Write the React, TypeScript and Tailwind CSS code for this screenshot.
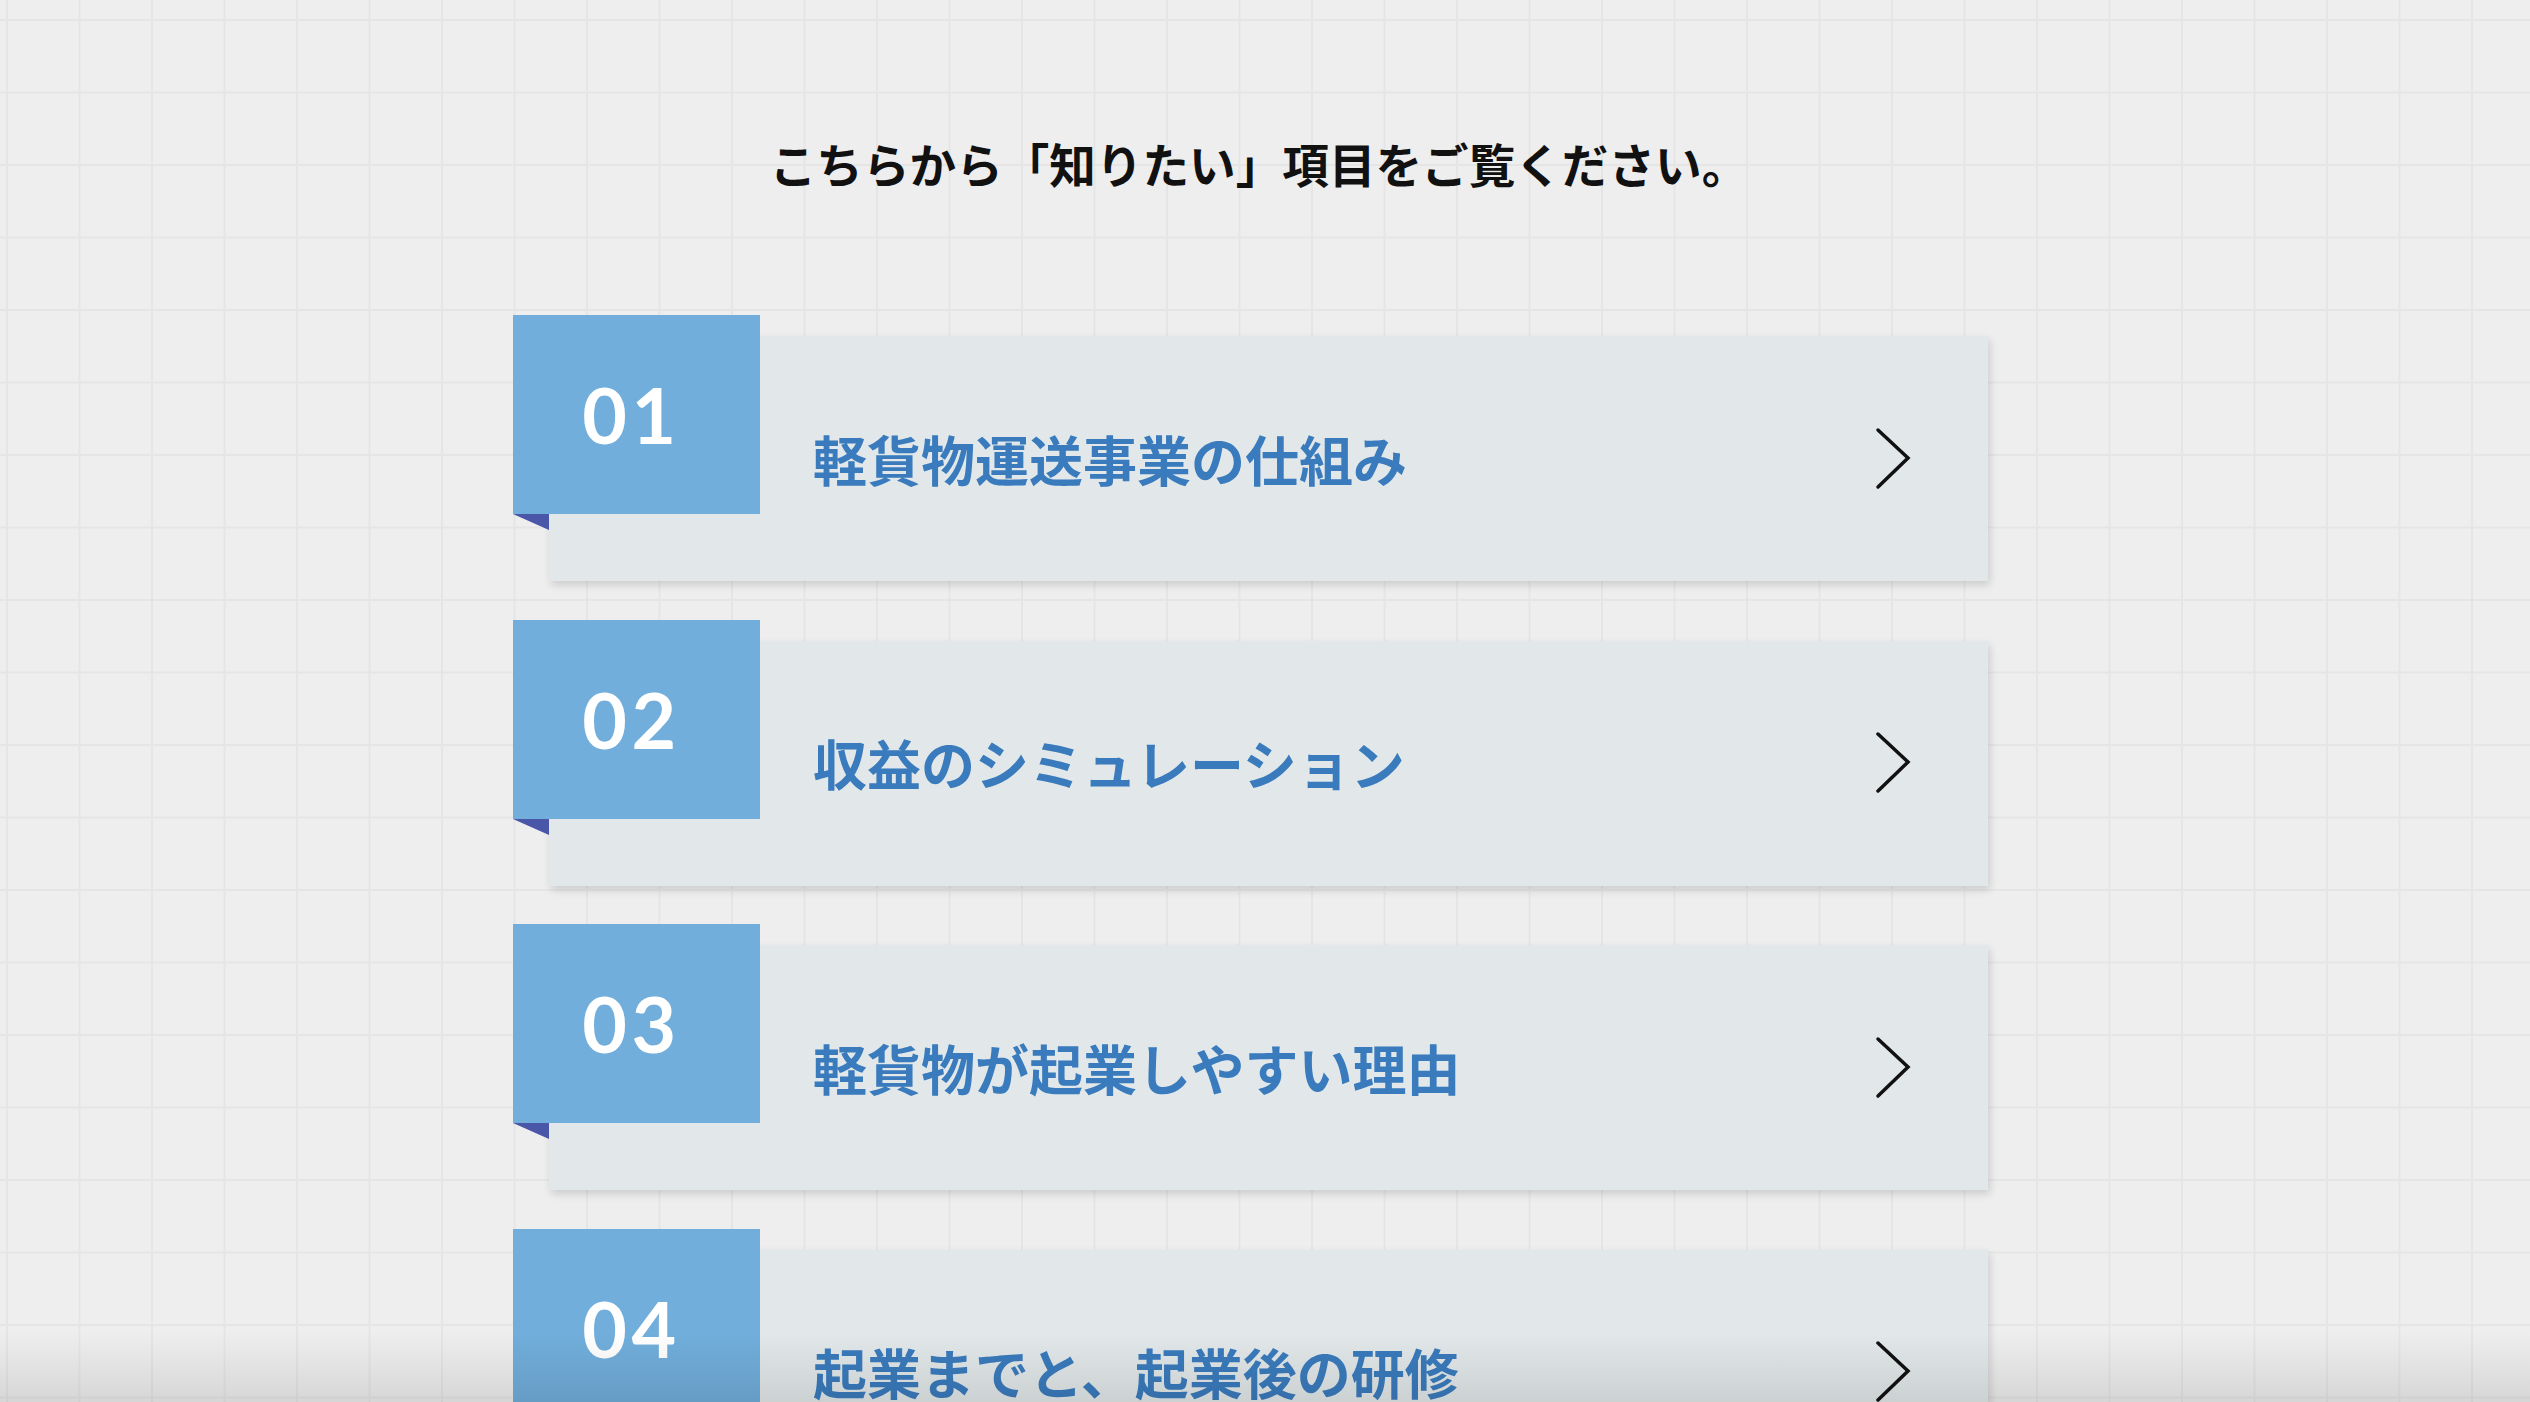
import React from "react";

const items = [
  { no: "01", title: "軽貨物運送事業の仕組み" },
  { no: "02", title: "収益のシミュレーション" },
  { no: "03", title: "軽貨物が起業しやすい理由" },
  { no: "04", title: "起業までと、起業後の研修" },
];

function Chevron() {
  return (
    <svg width="36" height="64" viewBox="0 0 36 64" fill="none" className="shrink-0">
      <polyline
        points="3,3 33,31 3,60"
        stroke="#111111"
        strokeWidth="3.5"
        strokeLinecap="round"
        strokeLinejoin="miter"
        fill="none"
      />
    </svg>
  );
}

function Card({ no, title }: { no: string; title: string }) {
  return (
    <a href="#" className="relative block w-[1475px] pt-[21px]">
      <div className="ml-[36px] flex h-[245px] items-center bg-[#e2e8e9] pl-[264px] pr-[77px] shadow-[2px_4px_8px_rgba(0,0,0,0.14)]">
        <span className="text-[54px] font-bold leading-none tracking-[0px] text-[#3a7bbd] [font-family:'Noto_Sans_CJK_JP',sans-serif]">
          {title}
        </span>
        <span className="ml-auto">
          <Chevron />
        </span>
      </div>
      <div className="absolute left-0 top-0 flex h-[199px] w-[247px] items-center justify-center bg-[#71aedb]">
        <span className="pr-[10px] text-[77px] font-bold leading-none tracking-[0.06em] text-white [font-family:Lato,'Noto_Sans',sans-serif]">
          {no}
        </span>
      </div>
      <svg
        className="absolute left-0 top-[199px]"
        width="36"
        height="16"
        viewBox="0 0 36 16"
      >
        <polygon points="0,0 36,0 36,16" fill="#4a56a8" />
      </svg>
    </a>
  );
}

export default function App() {
  return (
    <div className="relative h-[1402px] w-full overflow-hidden bg-[#eeeeee] bg-[linear-gradient(to_right,#e5e5e5_0_2px,transparent_2px),linear-gradient(to_bottom,#e5e5e5_0_2px,transparent_2px)] bg-[size:72.5px_72.5px] bg-[position:6px_19px]">
      <div className="pt-[140px]">
        <h2 className="pr-[12px] text-center text-[46.6px] font-bold leading-[46px] text-[#111111] [font-family:'Noto_Sans_CJK_JP',sans-serif]">
          こちらから「知りたい」項目をご覧ください。
        </h2>
        <div className="mx-auto mt-[129px] flex w-[1504px] flex-col gap-[38.5px]">
          {items.map((it) => (
            <Card key={it.no} no={it.no} title={it.title} />
          ))}
        </div>
      </div>
      <div className="pointer-events-none absolute inset-x-0 bottom-0 h-[70px] bg-gradient-to-b from-transparent to-black/10" />
    </div>
  );
}
